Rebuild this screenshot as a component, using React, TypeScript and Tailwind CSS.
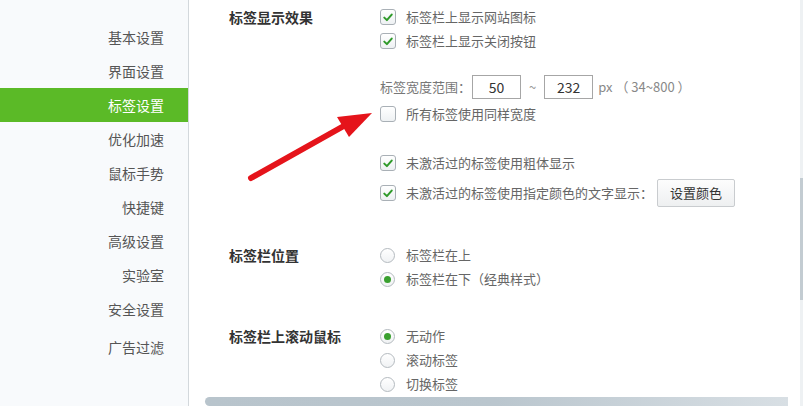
import React from 'react'

// Browser settings page — "标签设置" tab selected.

const NAV = ['基本设置', '界面设置', '标签设置', '优化加速', '鼠标手势', '快捷键', '高级设置', '实验室', '安全设置', '广告过滤']

function Check({ checked }: { checked: boolean }) {
  return (
    <span className="w-4 h-4 shrink-0 rounded-[3px] border border-[#a9b0b6] bg-gradient-to-b from-white to-[#eef1f3] flex items-center justify-center">
      {checked && (
        <svg width="10" height="9" viewBox="0 0 10 9">
          <path d="M1.3 4.6 L3.9 7.1 L8.7 1.6" fill="none" stroke="#2f9a2a" strokeWidth="2" strokeLinecap="round" strokeLinejoin="round" />
        </svg>
      )}
    </span>
  )
}

function Radio({ checked }: { checked: boolean }) {
  return (
    <span className="w-[15px] h-[15px] shrink-0 rounded-full border border-[#b4babf] bg-gradient-to-b from-white to-[#f0f2f4] flex items-center justify-center">
      {checked && <span className="w-[7px] h-[7px] rounded-full bg-[#3aa02f]" />}
    </span>
  )
}

function Row({ children, className = '' }: { children: React.ReactNode; className?: string }) {
  return <div className={`flex items-center h-6 text-[13px] text-[#666] ${className}`}>{children}</div>
}

function CheckRow({ checked, label, className = '' }: { checked: boolean; label: string; className?: string }) {
  return (
    <Row className={className}>
      <Check checked={checked} />
      <span className="ml-[10px] leading-6">{label}</span>
    </Row>
  )
}

function RadioRow({ checked, label, className = '' }: { checked: boolean; label: string; className?: string }) {
  return (
    <Row className={className}>
      <Radio checked={checked} />
      <span className="ml-[11px] leading-6">{label}</span>
    </Row>
  )
}

function Section({ title, children, className = '' }: { title: string; children: React.ReactNode; className?: string }) {
  return (
    <div className={`flex ${className}`}>
      <div className="w-[151px] shrink-0 h-6 leading-6 text-[14px] font-bold text-[#333]">{title}</div>
      <div className="flex flex-col">{children}</div>
    </div>
  )
}

export default function App() {
  return (
    <div
      className="w-[803px] h-[406px] overflow-hidden flex bg-white"
      style={{ fontFamily: '"Noto Sans CJK SC", "Liberation Sans", sans-serif' }}
    >
      {/* sidebar */}
      <div className="w-[189px] shrink-0 bg-[#f8fafc] border-r border-[#d3d8dc] pt-[20px] flex flex-col">
        {NAV.map((item, i) => (
          <div
            key={item}
            className={`h-[34px] flex items-center justify-end pr-[24px] text-[14px] ${
              i === 2 ? 'bg-[#5bba27] text-white' : 'text-[#555]'
            } ${i === NAV.length - 1 ? 'mt-1' : ''}`}
          >
            {item}
          </div>
        ))}
      </div>

      {/* main */}
      <div className="relative flex-1 flex flex-col">
        <div className="pl-[40px] pt-[5px] flex flex-col">
          <Section title="标签显示效果">
            <CheckRow checked label="标签栏上显示网站图标" />
            <CheckRow checked label="标签栏上显示关闭按钮" />
            <Row className="mt-[22px] text-[#777]">
              <span>标签宽度范围：</span>
              <span className="ml-[1px] w-[49px] h-6 border border-[#a6a6a6] bg-white flex items-center justify-center text-[14px] text-[#333]">
                50
              </span>
              <span className="mx-[8px] text-[#999]">~</span>
              <span className="w-[49px] h-6 border border-[#a6a6a6] bg-white flex items-center justify-center text-[14px] text-[#333]">
                232
              </span>
              <span className="ml-[5px] text-[#888] whitespace-pre">px （ 34~800 ）</span>
            </Row>
            <CheckRow checked={false} label="所有标签使用同样宽度" className="mt-[3px]" />
            <CheckRow checked label="未激活过的标签使用粗体显示" className="mt-[25px]" />
            <Row className="mt-[4px] h-7">
              <Check checked />
              <span className="ml-[10px]">未激活过的标签使用指定颜色的文字显示：</span>
              <button className="ml-[4px] w-[78px] h-7 rounded-[2px] border border-[#c9cccf] bg-gradient-to-b from-[#fdfdfd] to-[#eef0f1] text-[13px] text-[#333]">
                设置颜色
              </button>
            </Row>
          </Section>

          <Section title="标签栏位置" className="mt-[36px]">
            <RadioRow checked={false} label="标签栏在上" />
            <RadioRow checked label="标签栏在下（经典样式）" />
          </Section>

          <Section title="标签栏上滚动鼠标" className="mt-[33px]">
            <RadioRow checked label="无动作" />
            <RadioRow checked={false} label="滚动标签" />
            <RadioRow checked={false} label="切换标签" />
          </Section>
        </div>

        {/* horizontal scrollbar */}
        <div className="mt-px ml-[16px] mr-[12px] h-[10px] rounded-l-full bg-gradient-to-r from-[#b8c4cc] via-[#bac6ce] to-[#d8dfe4]" />

        {/* red arrow annotation */}
        <svg className="absolute left-0 top-0 pointer-events-none" width="614" height="406">
          <line x1="62" y1="178" x2="153" y2="127" stroke="#e5141b" strokeWidth="6" strokeLinecap="round" />
          <polygon points="183,113 148,117 160,137" fill="#e5141b" />
        </svg>
      </div>

      {/* vertical scrollbar edge */}
      <div className="w-[3px] shrink-0 bg-[#eef1f3] flex flex-col">
        <div className="mt-[178px] h-[122px] bg-[#c3ccd2]" />
      </div>
    </div>
  )
}
